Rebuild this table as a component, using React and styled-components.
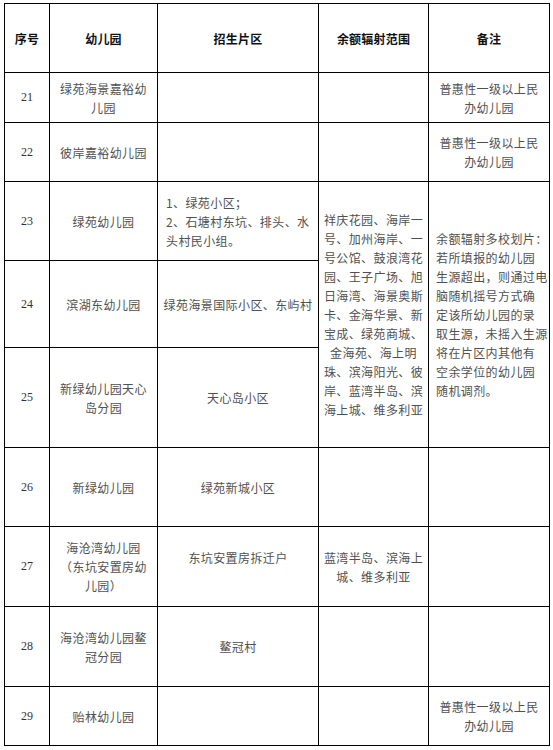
import React from "react";
import styled, { createGlobalStyle } from "styled-components";

const Global = createGlobalStyle`
  body {
    margin: 0;
    background: #fff;
  }
`;

const Page = styled.div`
  padding: 3px 0 0 4px;
  width: 553px;
  height: 750px;
  box-sizing: border-box;
  overflow: hidden;
`;

const Table = styled.table`
  border-collapse: collapse;
  table-layout: fixed;
  width: 546px;
  font-family: "Noto Sans CJK SC", "Noto Sans", sans-serif;
  font-size: 12px;
  line-height: 19px;
  color: #505050;
`;

const Row = styled.tr`
  height: ${p => p.$h}px;
`;

const HeadCell = styled.th`
  border: 1px solid #000;
  padding: 0;
  font-weight: 700;
  color: #111;
  letter-spacing: 0.2px;
  text-align: center;
  vertical-align: middle;
`;

const Cell = styled.td`
  border: 1px solid #000;
  padding: 0 ${p => p.$pad || 0}px;
  text-align: ${p => p.$align || "center"};
  vertical-align: middle;
  letter-spacing: 0.4px;
  white-space: nowrap;
`;

const NumCell = styled.td`
  border: 1px solid #000;
  padding: 0;
  text-align: center;
  vertical-align: middle;
  font-family: "Liberation Serif", serif;
  font-size: 12px;
  color: #333;
`;

const Line = styled.span`
  display: block;
`;

const Lines = ({ items }) => (
  <>
    {items.map((t, i) => (
      <Line key={i}>{t || "\u00a0"}</Line>
    ))}
  </>
);

const NOTE = ["普惠性一级以上民", "办幼儿园"];

const RANGE = [
  "祥庆花园、海岸一",
  "号、加州海岸、一",
  "号公馆、鼓浪湾花",
  "园、王子广场、旭",
  "日海湾、海景奥斯",
  "卡、金海华景、新",
  "宝成、绿苑商城、",
  "金海苑、海上明",
  "珠、滨海阳光、彼",
  "岸、蓝湾半岛、滨",
  "海上城、维多利亚",
];

const SHARED = [
  "余额辐射多校划片：",
  "若所填报的幼儿园",
  "生源超出，则通过电",
  "脑随机摇号方式确",
  "定该所幼儿园的录",
  "取生源，未摇入生源",
  "将在片区内其他有",
  "空余学位的幼儿园",
  "随机调剂。",
];

export default function App() {
  return (
    <Page>
      <Global />
      <Table>
        <colgroup>
          <col style={{ width: 45 }} />
          <col style={{ width: 108 }} />
          <col style={{ width: 161 }} />
          <col style={{ width: 110 }} />
          <col style={{ width: 121 }} />
        </colgroup>
        <tbody>
          <Row $h={69}>
            <HeadCell>序号</HeadCell>
            <HeadCell>幼儿园</HeadCell>
            <HeadCell>招生片区</HeadCell>
            <HeadCell>余额辐射范围</HeadCell>
            <HeadCell>备注</HeadCell>
          </Row>
          <Row $h={50}>
            <NumCell>21</NumCell>
            <Cell><Lines items={["绿苑海景嘉裕幼", "儿园"]} /></Cell>
            <Cell />
            <Cell />
            <Cell><Lines items={NOTE} /></Cell>
          </Row>
          <Row $h={59}>
            <NumCell>22</NumCell>
            <Cell>彼岸嘉裕幼儿园</Cell>
            <Cell />
            <Cell />
            <Cell><Lines items={NOTE} /></Cell>
          </Row>
          <Row $h={79}>
            <NumCell>23</NumCell>
            <Cell>绿苑幼儿园</Cell>
            <Cell $align="left" $pad={8}>
              <Lines items={["1、绿苑小区；", "2、石塘村东坑、排头、水", "头村民小组。"]} />
            </Cell>
            <Cell rowSpan={3}><Lines items={RANGE} /></Cell>
            <Cell rowSpan={3} $align="left" $pad={7}><Lines items={SHARED} /></Cell>
          </Row>
          <Row $h={87}>
            <NumCell>24</NumCell>
            <Cell>滨湖东幼儿园</Cell>
            <Cell>绿苑海景国际小区、东屿村</Cell>
          </Row>
          <Row $h={100}>
            <NumCell>25</NumCell>
            <Cell><Lines items={["新绿幼儿园天心", "岛分园"]} /></Cell>
            <Cell>天心岛小区</Cell>
          </Row>
          <Row $h={79}>
            <NumCell>26</NumCell>
            <Cell>新绿幼儿园</Cell>
            <Cell>绿苑新城小区</Cell>
            <Cell />
            <Cell />
          </Row>
          <Row $h={80}>
            <NumCell>27</NumCell>
            <Cell><Lines items={["海沧湾幼儿园", "（东坑安置房幼", "儿园）"]} /></Cell>
            <Cell><Lines items={["东坑安置房拆迁户", ""]} /></Cell>
            <Cell><Lines items={["蓝湾半岛、滨海上", "城、维多利亚"]} /></Cell>
            <Cell />
          </Row>
          <Row $h={80}>
            <NumCell>28</NumCell>
            <Cell><Lines items={["海沧湾幼儿园鳌", "冠分园"]} /></Cell>
            <Cell>鳌冠村</Cell>
            <Cell />
            <Cell />
          </Row>
          <Row $h={59}>
            <NumCell>29</NumCell>
            <Cell>贻林幼儿园</Cell>
            <Cell />
            <Cell />
            <Cell><Lines items={NOTE} /></Cell>
          </Row>
        </tbody>
      </Table>
    </Page>
  );
}
